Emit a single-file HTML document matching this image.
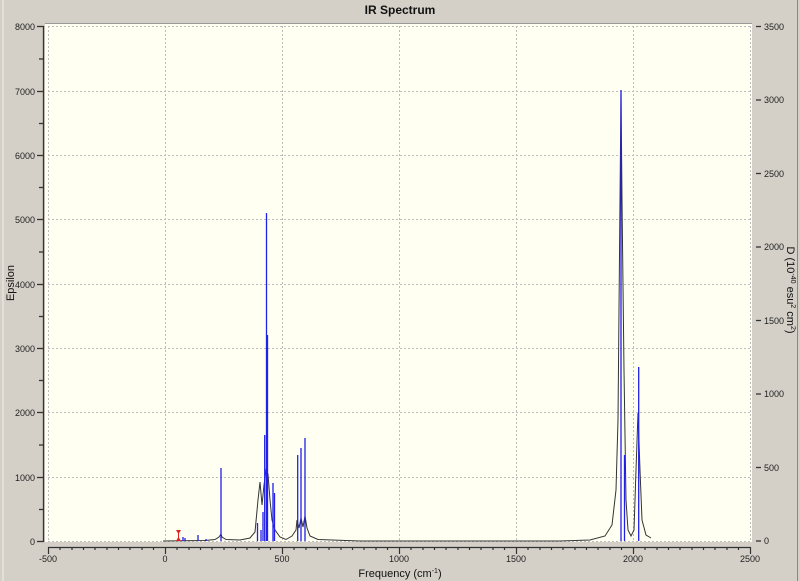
<!DOCTYPE html>
<html><head><meta charset="utf-8"><style>
html,body{margin:0;padding:0;background:#d4d0c8;}
svg{display:block;font-family:"Liberation Sans",sans-serif;}
</style></head><body>
<svg width="800" height="581" viewBox="0 0 800 581" xmlns="http://www.w3.org/2000/svg">
<rect width="800" height="581" fill="#d4d0c8"/>
<line x1="3" y1="0" x2="3" y2="581" stroke="#f2f0ec" stroke-width="1"/>
<line x1="797.5" y1="0" x2="797.5" y2="581" stroke="#8a8884" stroke-width="1"/>
<text x="400" y="14" text-anchor="middle" font-size="12" font-weight="bold" fill="#111">IR Spectrum</text>
<!-- plot area -->
<rect x="45" y="23" width="707" height="519" fill="#fffff2"/>
<line x1="45" y1="23.5" x2="752" y2="23.5" stroke="#9a9a9a"/>
<g stroke="#bdbdbd" stroke-dasharray="2,2" stroke-width="1">
<line x1="48.5" y1="26" x2="48.5" y2="541"/>
<line x1="165.5" y1="26" x2="165.5" y2="541"/>
<line x1="282.5" y1="26" x2="282.5" y2="541"/>
<line x1="399.5" y1="26" x2="399.5" y2="541"/>
<line x1="516.5" y1="26" x2="516.5" y2="541"/>
<line x1="633.5" y1="26" x2="633.5" y2="541"/>
<line x1="750.5" y1="26" x2="750.5" y2="541"/>
<line x1="48" y1="26.5" x2="751" y2="26.5"/>
<line x1="48" y1="91.5" x2="751" y2="91.5"/>
<line x1="48" y1="155.5" x2="751" y2="155.5"/>
<line x1="48" y1="219.5" x2="751" y2="219.5"/>
<line x1="48" y1="284.5" x2="751" y2="284.5"/>
<line x1="48" y1="348.5" x2="751" y2="348.5"/>
<line x1="48" y1="412.5" x2="751" y2="412.5"/>
<line x1="48" y1="477.5" x2="751" y2="477.5"/>
<line x1="48" y1="541.5" x2="751" y2="541.5"/>
</g>
<!-- left axis -->
<g stroke="#333" stroke-width="1.3">
<line x1="43.5" y1="26" x2="43.5" y2="542"/>
<line x1="37" y1="26.5" x2="44" y2="26.5"/><line x1="39" y1="59" x2="44" y2="59"/>
<line x1="37" y1="91.5" x2="44" y2="91.5"/><line x1="39" y1="123.5" x2="44" y2="123.5"/>
<line x1="37" y1="155.5" x2="44" y2="155.5"/><line x1="39" y1="187.5" x2="44" y2="187.5"/>
<line x1="37" y1="219.5" x2="44" y2="219.5"/><line x1="39" y1="252" x2="44" y2="252"/>
<line x1="37" y1="284.5" x2="44" y2="284.5"/><line x1="39" y1="316.5" x2="44" y2="316.5"/>
<line x1="37" y1="348.5" x2="44" y2="348.5"/><line x1="39" y1="380.5" x2="44" y2="380.5"/>
<line x1="37" y1="412.5" x2="44" y2="412.5"/><line x1="39" y1="445" x2="44" y2="445"/>
<line x1="37" y1="477.5" x2="44" y2="477.5"/><line x1="39" y1="509.5" x2="44" y2="509.5"/>
<line x1="37" y1="541.5" x2="44" y2="541.5"/>
</g>
<g font-size="9" fill="#222" text-anchor="end">
<text x="35" y="30">8000</text><text x="35" y="95">7000</text><text x="35" y="159">6000</text>
<text x="35" y="223">5000</text><text x="35" y="288">4000</text><text x="35" y="352">3000</text>
<text x="35" y="416">2000</text><text x="35" y="481">1000</text><text x="35" y="545">0</text>
</g>
<text transform="translate(14,283) rotate(-90)" text-anchor="middle" font-size="11" fill="#111">Epsilon</text>
<!-- right axis -->
<g stroke="#333" stroke-width="1.3">
<line x1="756" y1="26.5" x2="761" y2="26.5"/><line x1="756" y1="100" x2="761" y2="100"/>
<line x1="756" y1="173.5" x2="761" y2="173.5"/><line x1="756" y1="247" x2="761" y2="247"/>
<line x1="756" y1="320.5" x2="761" y2="320.5"/><line x1="756" y1="394" x2="761" y2="394"/>
<line x1="756" y1="467.5" x2="761" y2="467.5"/><line x1="756" y1="541" x2="761" y2="541"/>
</g>
<g font-size="9" fill="#222">
<text x="764" y="30">3500</text><text x="764" y="103">3000</text><text x="764" y="177">2500</text>
<text x="764" y="250">2000</text><text x="764" y="324">1500</text><text x="764" y="397">1000</text>
<text x="764" y="471">500</text><text x="764" y="544">0</text>
</g>
<text transform="translate(787,290) rotate(90)" text-anchor="middle" font-size="11" fill="#111">D (10<tspan dy="-4" font-size="7">-40</tspan><tspan dy="4"> esu</tspan><tspan dy="-4" font-size="7">2</tspan><tspan dy="4"> cm</tspan><tspan dy="-4" font-size="7">2</tspan><tspan dy="4">)</tspan></text>
<!-- bottom axis -->
<line x1="48" y1="547.5" x2="751" y2="547.5" stroke="#333" stroke-width="1.3"/>
<g stroke="#333" stroke-width="1.2" id="xt"></g>
<path stroke="#333" stroke-width="1.2" d="M48.5 547v7M60 547v3M72 547v3M83.5 547v3M95 547v3M107 547v3M118.5 547v3M130 547v3M142 547v3M153.5 547v3M165.5 547v7M177 547v3M189 547v3M200.5 547v3M212 547v3M224 547v3M235.5 547v3M247 547v3M259 547v3M270.5 547v3M282.5 547v7M294 547v3M306 547v3M317.5 547v3M329 547v3M341 547v3M352.5 547v3M364 547v3M376 547v3M387.5 547v3M399.5 547v7M411 547v3M423 547v3M434.5 547v3M446 547v3M458 547v3M469.5 547v3M481 547v3M493 547v3M504.5 547v3M516.5 547v7M528 547v3M540 547v3M551.5 547v3M563 547v3M575 547v3M586.5 547v3M598 547v3M610 547v3M621.5 547v3M633.5 547v7M645 547v3M657 547v3M668.5 547v3M680 547v3M692 547v3M703.5 547v3M715 547v3M727 547v3M738.5 547v3M750.5 547v7"/>
<g font-size="9" fill="#222" text-anchor="middle">
<text x="48" y="562">-500</text><text x="165" y="562">0</text><text x="282" y="562">500</text>
<text x="399" y="562">1000</text><text x="516" y="562">1500</text><text x="633" y="562">2000</text><text x="750" y="562">2500</text>
</g>
<text x="400" y="577" text-anchor="middle" font-size="11" fill="#111">Frequency (cm<tspan dy="-4" font-size="7">-1</tspan><tspan dy="4">)</tspan></text>
<!-- spectrum curve -->
<path fill="none" stroke="#333" stroke-width="1" d="M163 541 L205 540.5 L215 539.5 L219 537 L221 534 L222 537 L226 539.5 L240 540 L250 538 L255 532 L258 500 L260 482 L262 505 L264 485 L266 470 L268 474 L270 500 L272 520 L275 530 L280 537 L286 539.5 L292 536 L296 530 L297 520 L299 528 L301 518 L303 527 L305 516 L307 528 L310 536 L318 539.5 L360 541 L560 541 L590 540 L605 536 L612 525 L616 490 L618 420 L620 200 L621 90 L622 200 L624 370 L626 500 L628 530 L631 536 L634 530 L636 470 L638 413 L640 470 L642 520 L646 535 L651 538"/>
<!-- sticks -->
<g stroke="#2020e8" stroke-width="1.3">
<line x1="221" y1="541" x2="221" y2="468"/>
<line x1="257.5" y1="541" x2="257.5" y2="523"/>
<line x1="261" y1="541" x2="261" y2="530"/>
<line x1="263" y1="541" x2="263" y2="512"/>
<line x1="264.7" y1="541" x2="264.7" y2="435"/>
<line x1="266.5" y1="541" x2="266.5" y2="213"/>
<line x1="267.5" y1="541" x2="267.5" y2="335"/>
<line x1="273" y1="541" x2="273" y2="483"/>
<line x1="274.5" y1="541" x2="274.5" y2="493"/>
<line x1="297.7" y1="541" x2="297.7" y2="455"/>
<line x1="301" y1="541" x2="301" y2="448"/>
<line x1="305" y1="541" x2="305" y2="438"/>
<line x1="621" y1="541" x2="621" y2="90"/>
<line x1="624.5" y1="541" x2="624.5" y2="455"/>
<line x1="638.7" y1="541" x2="638.7" y2="367"/>
<line x1="183" y1="541" x2="183" y2="537"/>
<line x1="185" y1="541" x2="185" y2="538"/>
<line x1="198" y1="541" x2="198" y2="535"/>
<line x1="206" y1="541" x2="206" y2="539"/>
</g>
<!-- marker -->
<path d="M176 530 h5 l-2.5 4z M176 541 h5 l-2.5 -4z" fill="#e02020"/>
<line x1="178.5" y1="532" x2="178.5" y2="540" stroke="#e02020"/>
</svg>
</body></html>
